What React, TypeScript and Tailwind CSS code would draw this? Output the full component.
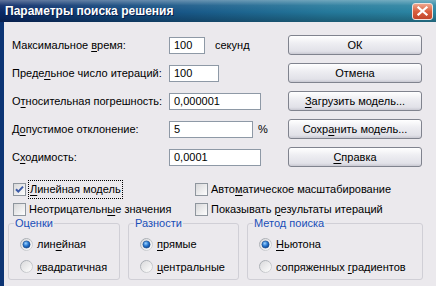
import React from 'react';

const U = ({ children }: { children: React.ReactNode }) => (
  <span className="underline decoration-1 underline-offset-[2px]">{children}</span>
);

const Checkbox = ({ checked }: { checked?: boolean }) => (
  <svg width="13" height="13" viewBox="0 0 13 13" className="shrink-0">
    <defs>
      <linearGradient id="cbg" x1="0" y1="0" x2="1" y2="1">
        <stop offset="0" stopColor="#d6d6d8" />
        <stop offset="1" stopColor="#ffffff" />
      </linearGradient>
    </defs>
    <rect x="0.5" y="0.5" width="12" height="12" fill="url(#cbg)" stroke="#8f969e" />
    {checked && (
      <path d="M3 6.2 L5.3 8.6 L10 3.6" fill="none" stroke="#3b5aa8" strokeWidth="2" />
    )}
  </svg>
);

const Radio = ({ checked }: { checked?: boolean }) => (
  <svg width="13" height="13" viewBox="0 0 13 13" className="shrink-0">
    <defs>
      <linearGradient id="rring" x1="0" y1="0" x2="1" y2="1">
        <stop offset="0" stopColor="#9ea3aa" />
        <stop offset="1" stopColor="#d9dadc" />
      </linearGradient>
      <linearGradient id="rfill" x1="0" y1="0" x2="1" y2="1">
        <stop offset="0" stopColor="#d8d8da" />
        <stop offset="1" stopColor="#ffffff" />
      </linearGradient>
      <radialGradient id="rdot" cx="0.4" cy="0.35" r="0.7">
        <stop offset="0" stopColor="#9fd4ff" />
        <stop offset="0.5" stopColor="#2a7ad2" />
        <stop offset="1" stopColor="#0a3f8c" />
      </radialGradient>
    </defs>
    <circle cx="6.5" cy="6.5" r="6" fill="url(#rfill)" stroke="url(#rring)" />
    {checked && <circle cx="6.5" cy="6.5" r="3.6" fill="url(#rdot)" stroke="#1b4a86" strokeWidth="0.6" />}
  </svg>
);

const XpButton = ({ children }: { children: React.ReactNode }) => (
  <button className="flex h-[20px] w-[134px] items-center justify-center rounded-[3px] border border-[#80838e] bg-[linear-gradient(to_bottom,#ffffff,#eeeef2_40%,#e1e1e8_85%,#c9c9d2)] text-[11px] text-black">
    {children}
  </button>
);

const rows = [
  { label: <>Максимальное <U>в</U>ремя:</>, value: '100', width: 'w-[36px]', suffix: 'секунд', suffixGap: 'ml-[10px]', button: <>ОК</> },
  { label: <>Преде<U>л</U>ьное число итераций:</>, value: '100', width: 'w-[50px]', suffix: '', suffixGap: '', button: <>Отмена</> },
  { label: <>О<U>т</U>носительная погрешность:</>, value: '0,000001', width: 'w-[92px]', suffix: '', suffixGap: '', button: <><U>З</U>агрузить модель...</> },
  { label: <>Д<U>о</U>пустимое отклонение:</>, value: '5', width: 'w-[84px]', suffix: '%', suffixGap: 'ml-[5px]', button: <>Сохр<U>а</U>нить модель...</> },
  { label: <>С<U>х</U>одимость:</>, value: '0,0001', width: 'w-[92px]', suffix: '', suffixGap: '', button: <><U>С</U>правка</> },
];

const groups = [
  { title: 'Оценки', width: 'w-[112px]', a: <>лин<U>е</U>йная</>, b: <><U>к</U>вадратичная</> },
  { title: 'Разности', width: 'w-[111px]', a: <><U>п</U>рямые</>, b: <><U>ц</U>ентральные</> },
  { title: 'Метод поиска', width: 'w-[176px]', a: <><U>Н</U>ьютона</>, b: <>сопряженных <U>г</U>радиентов</> },
];

export default function App() {
  return (
    <div className="flex h-[286px] w-[436px] flex-col overflow-hidden bg-[#ebe9ed] font-['Liberation_Sans',Arial,sans-serif] text-[11px] text-black">
      {/* Title bar */}
      <div className="relative flex h-[22px] shrink-0 items-center justify-between bg-[linear-gradient(to_right,#0a2866,#155083_35%,#24789a_75%,#2b86a3)] pl-[5px] pr-[3px]">
        <div className="pointer-events-none absolute inset-0 bg-[linear-gradient(to_bottom,rgba(255,255,255,0.35),rgba(255,255,255,0.08)_25%,rgba(0,0,0,0)_55%,rgba(0,0,0,0.25))]" />
        <span className="relative text-[12px] font-bold text-white [text-shadow:1px_1px_0_#0a1e4a]">
          Параметры поиска решения
        </span>
        <div className="relative flex h-[17px] w-[21px] items-center justify-center rounded-[3px] border border-[#f2e2dc] bg-[linear-gradient(to_bottom,#f0a58c,#d9603f_50%,#c2452a)]">
          <svg width="11" height="10" viewBox="0 0 11 10">
            <path d="M1.5 1.5 L9.5 8.5 M9.5 1.5 L1.5 8.5" stroke="#ffffff" strokeWidth="2.2" strokeLinecap="square" />
          </svg>
        </div>
      </div>

      <div className="flex flex-1">
        <div className="w-[4px] shrink-0 bg-[#0c3474]" />
        <div className="flex flex-1 flex-col">
          {/* Parameter rows */}
          <div className="flex flex-col pt-[9px]">
            {rows.map((r, i) => (
              <div key={i} className="flex h-[28px] items-center">
                <div className="w-[165px] shrink-0 pl-[8px]">{r.label}</div>
                <div className="flex w-[119px] shrink-0 items-center">
                  <div className={`${r.width} flex h-[17px] items-center border border-[#8e99a6] bg-white pl-[4px]`}>
                    {r.value}
                  </div>
                  {r.suffix && <span className={r.suffixGap}>{r.suffix}</span>}
                </div>
                <XpButton>{r.button}</XpButton>
              </div>
            ))}
          </div>

          {/* Checkboxes */}
          <div className="mt-[10px] grid grid-cols-[182px_1fr] gap-y-[4px] pl-[9px]">
            <div className="flex h-[16px] items-center gap-[2px]">
              <Checkbox checked />
              <span className="border border-dotted border-black px-[1px] leading-[17px]">
                <U>Л</U>инейная модель
              </span>
            </div>
            <div className="flex h-[16px] items-center gap-[3px]">
              <Checkbox />
              <span>
                Авто<U>м</U>атическое масштабирование
              </span>
            </div>
            <div className="flex h-[16px] items-center gap-[3px]">
              <Checkbox />
              <span>
                Неотрицательн<U>ы</U>е значения
              </span>
            </div>
            <div className="flex h-[16px] items-center gap-[3px]">
              <Checkbox />
              <span>
                Показывать <U>р</U>езультаты итераций
              </span>
            </div>
          </div>

          {/* Group boxes */}
          <div className="flex gap-[8px] pl-[4px]">
            {groups.map((g) => (
              <fieldset
                key={g.title}
                className={`${g.width} h-[63px] rounded-[3px] border border-[#d0cfd6] px-[11px]`}
              >
                <legend className="ml-[-6px] px-[1px] leading-[12px] text-[#1a4fb8]">{g.title}</legend>
                <div className="flex flex-col gap-[6px] pt-[7px]">
                  <div className="flex items-center gap-[4px]">
                    <Radio checked />
                    <span>{g.a}</span>
                  </div>
                  <div className="flex items-center gap-[4px]">
                    <Radio />
                    <span>{g.b}</span>
                  </div>
                </div>
              </fieldset>
            ))}
          </div>
        </div>
      </div>
    </div>
  );
}
